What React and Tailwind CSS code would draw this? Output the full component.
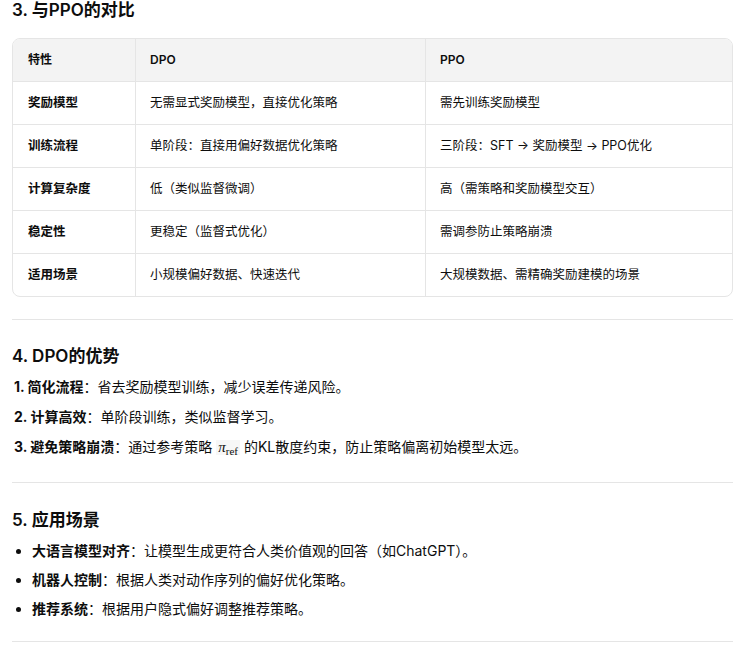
export default function App() {
  const rows = [
    ['奖励模型', '无需显式奖励模型，直接优化策略', '需先训练奖励模型'],
    ['训练流程', '单阶段：直接用偏好数据优化策略', '三阶段：SFT → 奖励模型 → PPO优化'],
    ['计算复杂度', '低（类似监督微调）', '高（需策略和奖励模型交互）'],
    ['稳定性', '更稳定（监督式优化）', '需调参防止策略崩溃'],
    ['适用场景', '小规模偏好数据、快速迭代', '大规模数据、需精确奖励建模的场景'],
  ];
  const cell = 'px-[14px] flex items-center border-l border-[#e5e5e5]';
  return (
    <div className="w-[752px] h-[650px] overflow-hidden bg-white text-[#0d0d0d] text-[14px]" style={{ fontFamily: 'Inter, "Noto Sans CJK SC", sans-serif' }}>
      <div className="pl-[12px] pr-[19px]">
        <h3 className="text-[17px] font-semibold h-[22px] leading-[21px] mt-0">3. 与PPO的对比</h3>
        <div className="mt-[16px] border border-[#e5e5e5] rounded-lg overflow-hidden">
          <div className="grid grid-cols-[122px_290px_1fr] h-[42px] bg-[#f3f3f3] font-semibold text-[12px]">
            <div className="px-[15px] flex items-center">特性</div>
            <div className={cell}>DPO</div>
            <div className={cell}>PPO</div>
          </div>
          {rows.map((r) => (
            <div key={r[0]} className="grid grid-cols-[122px_290px_1fr] h-[43px] border-t border-[#e5e5e5] text-[12.5px]">
              <div className="px-[15px] flex items-center font-semibold">{r[0]}</div>
              <div className={cell}>{r[1]}</div>
              <div className={cell}>{r[2]}</div>
            </div>
          ))}
        </div>
        <div className="mt-[22px] border-t border-[#e5e5e5]" />
        <h3 className="mt-[24px] text-[17px] font-semibold h-[24px] leading-[24px]">4. DPO的优势</h3>
        <ol className="mt-[9px] pl-[2px] space-y-[10px]">
          <li className="leading-[20px]"><b>1. 简化流程</b>：省去奖励模型训练，减少误差传递风险。</li>
          <li className="leading-[20px]"><b>2. 计算高效</b>：单阶段训练，类似监督学习。</li>
          <li className="leading-[20px]"><b>3. 避免策略崩溃</b>：通过参考策略 <span className="bg-[#f7f7f7] px-[2px]" style={{ fontFamily: '"Liberation Serif", serif' }}><i className="text-[15px]">π</i><sub className="text-[11px]">ref</sub></span> 的KL散度约束，防止策略偏离初始模型太远。</li>
        </ol>
        <div className="mt-[24px] border-t border-[#e5e5e5]" />
        <h3 className="mt-[25px] text-[17px] font-semibold h-[24px] leading-[24px]">5. 应用场景</h3>
        <ul className="mt-[9px] pl-[4px] space-y-[9px]">
          {[
            ['大语言模型对齐', '：让模型生成更符合人类价值观的回答（如ChatGPT）。'],
            ['机器人控制', '：根据人类对动作序列的偏好优化策略。'],
            ['推荐系统', '：根据用户隐式偏好调整推荐策略。'],
          ].map((b) => (
            <li key={b[0]} className="flex items-center leading-[20px]">
              <span className="w-[5px] h-[5px] rounded-full bg-[#0d0d0d] mr-[11px]" />
              <b>{b[0]}</b>{b[1]}
            </li>
          ))}
        </ul>
        <div className="mt-[22px] border-t border-[#e5e5e5]" />
      </div>
    </div>
  );
}
